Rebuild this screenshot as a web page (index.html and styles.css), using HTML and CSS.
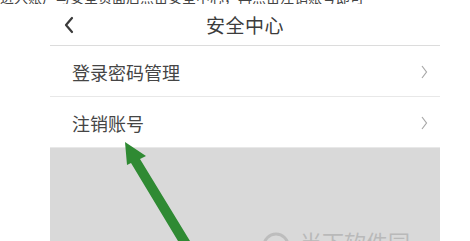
FILE: index.html
```html
<!DOCTYPE html>
<html lang="zh">
<head>
<meta charset="utf-8">
<link rel="stylesheet" href="styles.css">
</head>
<body>
<div class="clip"><span>进入账户与安全页面后点击安全中心，再点击注销账号即可</span></div>
<div class="panel">
  <div class="header">
    <svg class="back" width="12" height="18" viewBox="0 0 12 18"><polyline points="9,2 3,9 9,16" fill="none" stroke="#3a3a3a" stroke-width="2.2" stroke-linecap="round" stroke-linejoin="round"/></svg>
    <div class="title">安全中心</div>
    <div></div>
  </div>
  <div class="row">
    <span class="label">登录密码管理</span>
    <svg class="chev" width="8" height="16" viewBox="0 0 8 16"><polyline points="2,2 6.5,8 2,14" fill="none" stroke="#a8a8a8" stroke-width="1.2"/></svg>
  </div>
  <div class="row">
    <span class="label">注销账号</span>
    <svg class="chev" width="8" height="16" viewBox="0 0 8 16"><polyline points="2,2 6.5,8 2,14" fill="none" stroke="#a8a8a8" stroke-width="1.2"/></svg>
  </div>
  <div class="blank"></div>
</div>
<svg class="arrow" width="470" height="241" viewBox="0 0 470 241">
  <polygon points="125,142 146,156 140,159 190,241 178,241 131,163 127,165" fill="#2f8a33"/>
</svg>
<div class="mark">
  <svg width="28" height="14" viewBox="0 0 28 14"><path d="M2,14 A12,12 0 0 1 26,14" fill="none" stroke="#bdbdbd" stroke-width="3"/></svg>
  <span>当下软件园</span>
</div>
</body>
</html>
```
FILE: styles.css
```css
html, body {
  margin: 0;
  padding: 0;
  background: #fff;
  width: 470px;
  height: 241px;
  overflow: hidden;
  font-family: "Noto Sans CJK SC", "Noto Sans", sans-serif;
}
.clip {
  height: 4px;
  overflow: hidden;
  white-space: nowrap;
}
.clip span {
  display: block;
  font-size: 14px;
  line-height: 14px;
  margin-top: -10px;
  color: #444;
}
.panel {
  margin-left: 50px;
  width: 390px;
}
.header {
  height: 40px;
  display: grid;
  grid-template-columns: 1fr auto 1fr;
  align-items: center;
  border-bottom: 1px solid #dcdcdc;
  padding-bottom: 1px;
}
.back {
  margin-left: 13px;
  margin-top: 2px;
}
.title {
  font-size: 19px;
  color: #3c3c3c;
  letter-spacing: 0.5px;
}
.row {
  height: 50px;
  display: flex;
  align-items: center;
  justify-content: space-between;
  border-bottom: 1px solid #e8e8e8;
  padding: 0 12px 0 22px;
}
.label {
  font-size: 18px;
  color: #454545;
  margin-top: 2px;
}
.chev {
  margin-top: 2px;
}
.blank {
  height: 94px;
  background: #d9d9d9;
}
.arrow {
  position: absolute;
  left: 0;
  top: 0;
}
.mark {
  position: absolute;
  left: 262px;
  top: 228px;
  height: 13px;
  overflow: hidden;
  display: flex;
  align-items: flex-start;
  gap: 10px;
  color: #b9b9b9;
  font-size: 22px;
  line-height: 26px;
}
.mark svg {
  margin-top: 4px;
}
```
